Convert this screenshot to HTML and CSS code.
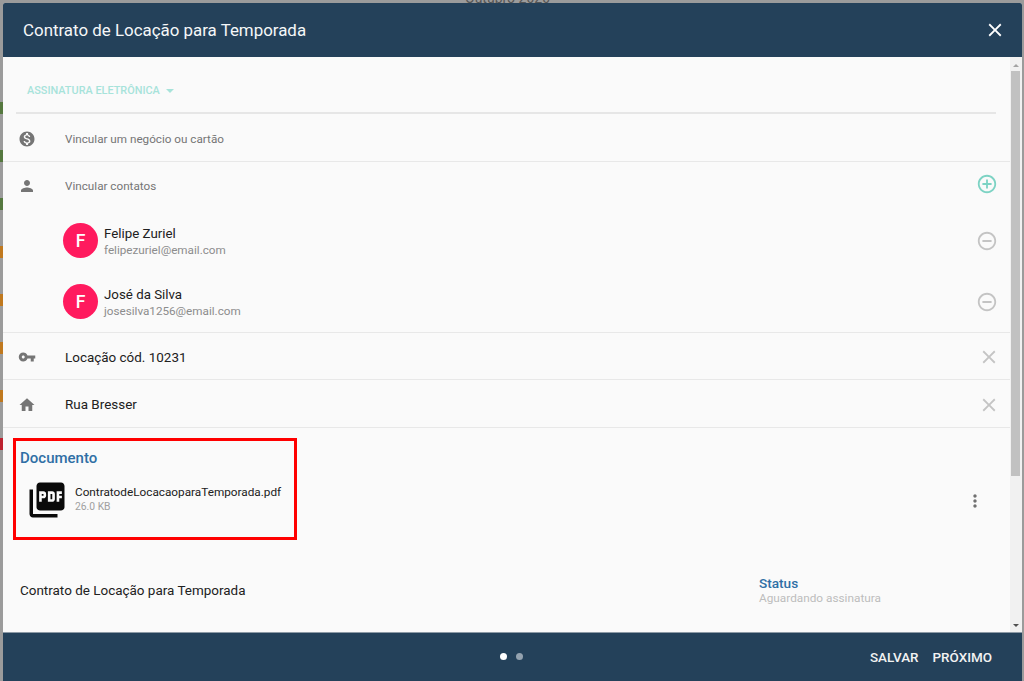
FILE: index.html
```html
<!DOCTYPE html>
<html lang="pt-BR">
<head>
<meta charset="utf-8">
<title>Contrato de Locação para Temporada</title>
<link rel="stylesheet" href="styles.css">
</head>
<body>
<div class="backdrop">
  <div class="backdrop-month">Outubro 2020</div>
  <div class="backdrop-marks">
    <span class="mark mark-green"></span>
    <span class="mark mark-green"></span>
    <span class="mark mark-green"></span>
    <span class="mark mark-orange"></span>
    <span class="mark mark-orange"></span>
    <span class="mark mark-orange"></span>
    <span class="mark mark-orange"></span>
    <span class="mark mark-red"></span>
  </div>
</div>
<div class="dialog">
  <header class="dialog-header">
    <h1 class="dialog-title">Contrato de Locação para Temporada</h1>
    <svg class="icon-close-light" viewBox="0 0 24 24"><path d="M19 6.41L17.59 5 12 10.59 6.41 5 5 6.41 10.59 12 5 17.59 6.41 19 12 13.41 17.59 19 19 17.59 13.41 12z"/></svg>
  </header>
  <div class="dialog-main">
    <div class="content">
      <div class="tab-row">
        <span class="tab-label">ASSINATURA ELETRÔNICA</span>
        <span class="tab-caret"></span>
      </div>
      <div class="row row-tall">
        <svg class="row-icon" viewBox="0 0 24 24"><path d="M12 2C6.48 2 2 6.48 2 12s4.48 10 10 10 10-4.48 10-10S17.52 2 12 2zm1.41 16.09V20h-2.67v-1.93c-1.71-.36-3.16-1.46-3.27-3.4h1.96c.1 1.05.82 1.87 2.65 1.87 1.96 0 2.4-.98 2.4-1.59 0-.83-.44-1.61-2.67-2.14-2.48-.6-4.18-1.62-4.18-3.67 0-1.72 1.39-2.84 3.11-3.21V4h2.67v1.95c1.86.45 2.79 1.86 2.85 3.39H14.3c-.05-1.11-.64-1.87-2.22-1.87-1.5 0-2.4.68-2.4 1.64 0 .84.65 1.39 2.67 1.91s4.18 1.39 4.18 3.91c-.01 1.83-1.38 2.83-3.12 3.16z"/></svg>
        <span class="row-placeholder">Vincular um negócio ou cartão</span>
      </div>
      <div class="contacts">
        <div class="contacts-head">
          <svg class="row-icon" viewBox="0 0 24 24"><path d="M12 12c2.21 0 4-1.79 4-4s-1.79-4-4-4-4 1.79-4 4 1.79 4 4 4zm0 2c-2.67 0-8 1.34-8 4v2h16v-2c0-2.66-5.33-4-8-4z"/></svg>
          <span class="row-placeholder">Vincular contatos</span>
          <svg class="circle-icon circle-add" viewBox="0 0 24 24"><path d="M13 7h-2v4H7v2h4v4h2v-4h4v-2h-4V7zm-1-5C6.48 2 2 6.48 2 12s4.48 10 10 10 10-4.48 10-10S17.52 2 12 2zm0 18c-4.41 0-8-3.59-8-8s3.59-8 8-8 8 3.59 8 8-3.59 8-8 8z"/></svg>
        </div>
        <div class="contact">
          <span class="avatar">F</span>
          <div class="contact-text">
            <div class="contact-name">Felipe Zuriel</div>
            <div class="contact-mail">felipezuriel@email.com</div>
          </div>
          <svg class="circle-icon circle-remove" viewBox="0 0 24 24"><path d="M7 11v2h10v-2H7zm5-9C6.48 2 2 6.48 2 12s4.48 10 10 10 10-4.48 10-10S17.52 2 12 2zm0 18c-4.41 0-8-3.59-8-8s3.59-8 8-8 8 3.59 8 8-3.59 8-8 8z"/></svg>
        </div>
        <div class="contact">
          <span class="avatar">F</span>
          <div class="contact-text">
            <div class="contact-name">José da Silva</div>
            <div class="contact-mail">josesilva1256@email.com</div>
          </div>
          <svg class="circle-icon circle-remove" viewBox="0 0 24 24"><path d="M7 11v2h10v-2H7zm5-9C6.48 2 2 6.48 2 12s4.48 10 10 10 10-4.48 10-10S17.52 2 12 2zm0 18c-4.41 0-8-3.59-8-8s3.59-8 8-8 8 3.59 8 8-3.59 8-8 8z"/></svg>
        </div>
      </div>
      <div class="row">
        <svg class="row-icon" viewBox="0 0 24 24"><path d="M12.65 10C11.83 7.67 9.61 6 7 6c-3.31 0-6 2.69-6 6s2.69 6 6 6c2.61 0 4.83-1.67 5.65-4H17v4h4v-4h2v-4H12.65zM7 14c-1.1 0-2-.9-2-2s.9-2 2-2 2 .9 2 2-.9 2-2 2z"/></svg>
        <span class="row-value">Locação cód. 10231</span>
        <svg class="x-icon" viewBox="0 0 24 24"><path d="M19 6.41L17.59 5 12 10.59 6.41 5 5 6.41 10.59 12 5 17.59 6.41 19 12 13.41 17.59 19 19 17.59 13.41 12z"/></svg>
      </div>
      <div class="row row-tall">
        <svg class="row-icon" viewBox="0 0 24 24"><path d="M10 20v-6h4v6h5v-8h3L12 3 2 12h3v8z"/></svg>
        <span class="row-value">Rua Bresser</span>
        <svg class="x-icon" viewBox="0 0 24 24"><path d="M19 6.41L17.59 5 12 10.59 6.41 5 5 6.41 10.59 12 5 17.59 6.41 19 12 13.41 17.59 19 19 17.59 13.41 12z"/></svg>
      </div>
      <section class="document">
        <div class="highlight"></div>
        <h2 class="section-title">Documento</h2>
        <div class="file">
          <svg class="file-icon" viewBox="0 0 24 24"><path d="M20 2H8c-1.1 0-2 .9-2 2v12c0 1.1.9 2 2 2h12c1.1 0 2-.9 2-2V4c0-1.1-.9-2-2-2zm-8.5 7.5c0 .83-.67 1.5-1.5 1.5H9v2H7.5V7H10c.83 0 1.5.67 1.5 1.5v1zm5 2c0 .83-.67 1.5-1.5 1.5h-2.5V7H15c.83 0 1.5.67 1.5 1.5v3zm4-3H19v1h1.5V11H19v2h-1.5V7h3v1.5zM9 9.5h1v-1H9v1zM4 6H2v14c0 1.1.9 2 2 2h14v-2H4V6zm10 5.5h1v-3h-1v3z"/></svg>
          <div class="file-text">
            <div class="file-name">ContratodeLocacaoparaTemporada.pdf</div>
            <div class="file-size">26.0 KB</div>
          </div>
          <svg class="more-icon" viewBox="0 0 24 24"><path d="M12 8c1.1 0 2-.9 2-2s-.9-2-2-2-2 .9-2 2 .9 2 2 2zm0 2c-1.1 0-2 .9-2 2s.9 2 2 2 2-.9 2-2-.9-2-2-2zm0 6c-1.1 0-2 .9-2 2s.9 2 2 2 2-.9 2-2-.9-2-2-2z"/></svg>
        </div>
      </section>
      <div class="summary">
        <span class="summary-name">Contrato de Locação para Temporada</span>
        <div class="status">
          <div class="status-label">Status</div>
          <div class="status-value">Aguardando assinatura</div>
        </div>
      </div>
    </div>
    <div class="scrollbar">
      <span class="arrow-up"></span>
      <div class="scroll-track"><div class="scroll-thumb"></div></div>
      <span class="arrow-down"></span>
    </div>
  </div>
  <footer class="dialog-footer">
    <div class="dots"><span class="dot dot-on"></span><span class="dot"></span></div>
    <div class="actions"><span class="action">SALVAR</span><span class="action">PRÓXIMO</span></div>
  </footer>
</div>
</body>
</html>
```
FILE: styles.css
```css
* { box-sizing: border-box; }
html, body { margin: 0; height: 100%; }
body {
  position: relative;
  overflow: hidden;
  background: #9b9b9b;
  font-family: Roboto, "Liberation Sans", sans-serif;
  color: #212121;
}
.backdrop { height: 100%; }
.backdrop-month {
  height: 0;
  padding-left: 465px;
  font-size: 14px;
  line-height: 14px;
  color: #555;
  transform: translateY(-9px);
}
.backdrop-marks {
  display: flex;
  flex-direction: column;
  gap: 36px;
  width: 3px;
  padding-top: 102px;
}
.mark { height: 12px; }
.mark-green { background: #55783f; }
.mark-orange { background: #c0791f; }
.mark-red { background: #bd2230; }
.dialog {
  position: absolute;
  left: 3px;
  top: 3px;
  width: 1019px;
  height: 678px;
  display: flex;
  flex-direction: column;
  background: #fafafa;
  border-radius: 2px 2px 0 0;
  overflow: hidden;
}
.dialog-header {
  height: 54px;
  flex: none;
  display: flex;
  align-items: center;
  justify-content: space-between;
  padding: 0 16px 0 20px;
  background: #24415a;
  color: #fff;
}
.dialog-title { margin: 0; font-size: 16.9px; font-weight: 400; color: #f5f7f8; }
.icon-close-light { width: 22px; height: 22px; fill: #fff; }
.dialog-main { flex: 1; min-height: 0; display: flex; }
.content { flex: 1; min-width: 0; }
.scrollbar {
  width: 12px;
  flex: none;
  display: flex;
  flex-direction: column;
  align-items: center;
  background: #f1f1f1;
  padding: 7px 0 5px;
}
.scroll-track { flex: 1; width: 9px; padding-top: 4px; align-self: flex-start; margin-left: 1px; }
.scroll-thumb { height: 405px; background: #c1c1c1; }
.arrow-up, .arrow-down { width: 0; height: 0; border-left: 3px solid transparent; border-right: 3px solid transparent; }
.arrow-up { border-bottom: 3px solid #a3a3a3; }
.arrow-down { border-top: 3px solid #505050; }
.tab-row {
  height: 57px;
  margin: 0 14px 0 13px;
  padding: 12px 0 0 11px;
  display: flex;
  align-items: center;
  gap: 6px;
  border-bottom: 2px solid #e6e6e6;
}
.tab-label { font-size: 10.9px; font-weight: 500; color: #a7e3da; }
.tab-caret { width: 0; height: 0; margin-top: 1px; border-left: 4.5px solid transparent; border-right: 4.5px solid transparent; border-top: 4px solid #a7e3da; }
.row {
  height: 47px;
  display: flex;
  align-items: center;
  padding: 2px 14px 0 15px;
  border-bottom: 1px solid #e8e8e8;
}
.row-tall { height: 48px; }
.row-icon { width: 18px; height: 18px; flex: none; fill: #757575; margin-right: 29px; }
.row-placeholder { font-size: 11.7px; color: #757575; }
.row-value { font-size: 13.45px; color: #212121; flex: 1; }
.x-icon { width: 22px; height: 22px; fill: #c4c4c4; margin-right: -4px; }
.contacts { border-bottom: 1px solid #e8e8e8; height: 171px; }
.contacts-head {
  height: 48px;
  display: flex;
  align-items: center;
  padding: 0 0 0 15px;
  position: relative;
}
.circle-icon { width: 22px; height: 22px; flex: none; }
.circle-add { fill: #7dd3c4; position: absolute; left: 973px; top: 11px; }
.circle-remove { fill: #c4c4c4; }
.contact {
  height: 61px;
  display: flex;
  align-items: center;
  padding: 0 12px 0 60px;
}
.avatar {
  width: 35px;
  height: 35px;
  flex: none;
  margin-right: 6px;
  border-radius: 50%;
  background: #ff1a5e;
  color: #fff;
  font-size: 17.5px;
  font-weight: 500;
  display: flex;
  align-items: center;
  justify-content: center;
}
.contact-text { flex: 1; margin-top: 2px; }
.contact-name { font-size: 13.3px; line-height: 17px; color: #212121; }
.contact-mail { font-size: 11.7px; line-height: 17px; color: #8c8c8c; }
.document { position: relative; height: 111px; padding: 22px 0 0 17px; }
.highlight {
  position: absolute;
  left: 10px;
  top: 10px;
  width: 284px;
  height: 102px;
  border: 3px solid #ff0000;
}
.section-title { margin: 0; font-size: 15px; line-height: 17px; font-weight: 500; color: #2f6fa5; }
.file { display: flex; align-items: center; margin-top: 12px; padding-left: 6px; }
.file-icon { width: 42px; height: 42px; flex: none; margin-right: 7px; fill: #0a0a0a; }
.file-text { flex: 1; margin-top: -2px; }
.file-name { font-size: 11.77px; line-height: 15px; color: #212121; }
.file-size { font-size: 10.3px; line-height: 13px; color: #a0a0a0; }
.more-icon { width: 20px; height: 20px; fill: #707070; margin-right: 25px; margin-top: 2px; }
.summary {
  display: flex;
  justify-content: space-between;
  align-items: center;
  padding: 36px 0 0 17px;
}
.summary-name { font-size: 13.46px; line-height: 17px; color: #212121; }
.status { width: 251px; }
.status-label { font-size: 13.6px; line-height: 16px; font-weight: 500; color: #2f6fa5; }
.status-value { font-size: 11.8px; line-height: 14px; color: #bdbdbd; }
.dialog-footer {
  height: 49px;
  flex: none;
  position: relative;
  display: flex;
  align-items: center;
  justify-content: flex-end;
  padding: 0 30px 0 0;
  background: #24415a;
  border-top: 1px solid #8d9aa6;
}
.dots { position: absolute; left: 497px; top: 20px; display: flex; gap: 9px; }
.dot { width: 7px; height: 7px; border-radius: 50%; background: #94a2af; }
.dot-on { background: #fff; }
.actions { display: flex; gap: 14px; }
.action { font-size: 13.45px; font-weight: 500; color: #f2f2f2; }
```
